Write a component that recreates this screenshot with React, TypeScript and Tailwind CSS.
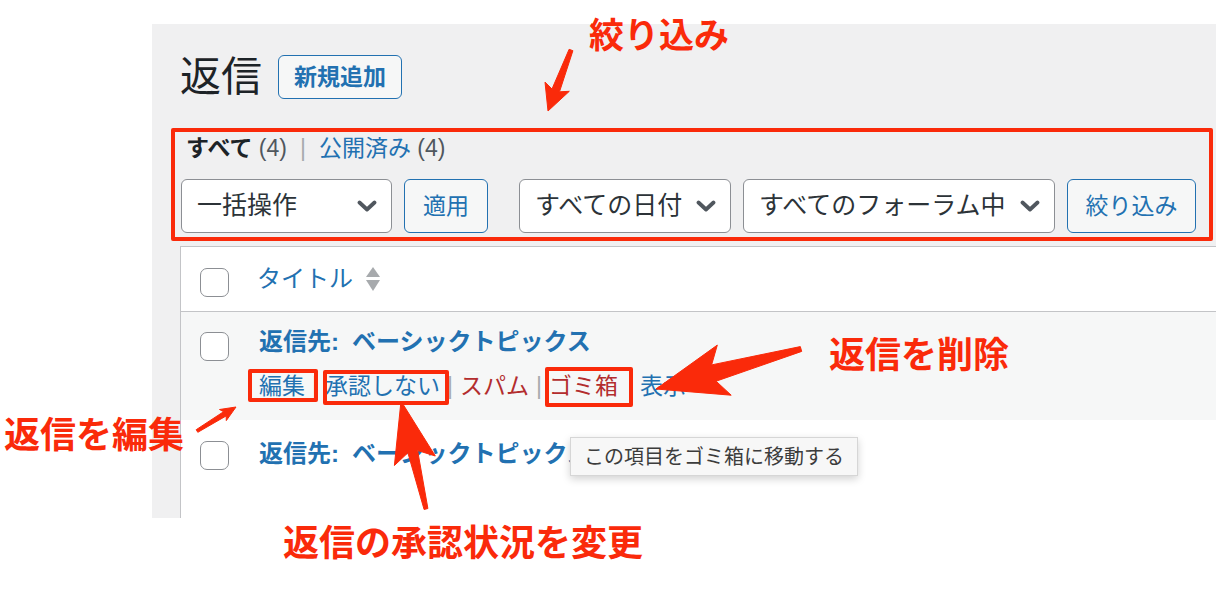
import React from 'react';

type Pt = [number, number];

// Skitch style arrow: thin tail, wider neck, triangular head with swept barbs
function arrowPoints(tail: Pt, tip: Pt, tailW: number, neckW: number, headLen: number, headW: number, sweep = 0.18): string {
    const dx = tip[0] - tail[0];
    const dy = tip[1] - tail[1];
    const len = Math.hypot(dx, dy);
    const ux = dx / len;
    const uy = dy / len;
    const nx = -uy;
    const ny = ux;
    const bx = tip[0] - ux * headLen;
    const by = tip[1] - uy * headLen;
    const back = headLen * sweep;
    const pts: Pt[] = [
        [tail[0] + (nx * tailW) / 2, tail[1] + (ny * tailW) / 2],
        [bx + (nx * neckW) / 2, by + (ny * neckW) / 2],
        [bx + (nx * headW) / 2 - ux * back, by + (ny * headW) / 2 - uy * back],
        tip,
        [bx - (nx * headW) / 2 - ux * back, by - (ny * headW) / 2 - uy * back],
        [bx - (nx * neckW) / 2, by - (ny * neckW) / 2],
        [tail[0] - (nx * tailW) / 2, tail[1] - (ny * tailW) / 2]
    ];
    return pts.map((p) => `${p[0].toFixed(1)},${p[1].toFixed(1)}`).join(' ');
}

const ARROWS: { tail: Pt; tip: Pt; tailW: number; neckW: number; headLen: number; headW: number }[] = [
    { tail: [571, 50], tip: [548, 111], tailW: 4, neckW: 8, headLen: 22, headW: 26 },
    { tail: [801, 349], tip: [656, 389], tailW: 5, neckW: 17, headLen: 60, headW: 52 },
    { tail: [197, 431], tip: [236, 407], tailW: 3, neckW: 5, headLen: 13, headW: 13 },
    { tail: [426, 509], tip: [401, 401], tailW: 4, neckW: 10, headLen: 52, headW: 42 }
];

function Chevron() {
    return (
        <svg width="20" height="12" viewBox="0 0 20 12" className="shrink-0">
            <path d="M2.5 2.5 L10 9.5 L17.5 2.5" fill="none" stroke="#50575e" strokeWidth="3.8" strokeLinecap="round" strokeLinejoin="round" />
        </svg>
    );
}

function Select({ label, width }: { label: string; width: string }) {
    return (
        <div className={`${width} h-[54px] flex items-center justify-between pl-[15px] pr-[14px] bg-white border border-[#8c8f94] rounded-[6px] text-[25px] text-[#2c3338]`}>
            <span className="whitespace-nowrap">{label}</span>
            <Chevron />
        </div>
    );
}

function Checkbox() {
    return <div className="w-[29px] h-[29px] bg-white border-[1.5px] border-[#8c8f94] rounded-[7px]" />;
}

function Sep({ wide = false }: { wide?: boolean }) {
    return <span className={wide ? 'ml-[10px] mr-[6px] text-[#a7aaad]' : 'mx-[7px] text-[#a7aaad]'}>|</span>;
}

function ReplyTitle() {
    return (
        <div className="text-[24px] leading-[32px] font-bold text-[#2271b1] whitespace-nowrap">
            返信先:<span className="ml-[13px]">ベーシックトピックス</span>
        </div>
    );
}

export default function App() {
    return (
        <div className="relative w-[1216px] h-[614px] overflow-hidden bg-white pl-[152px] pt-[24px] font-['Liberation_Sans','Noto_Sans_CJK_JP',sans-serif]">
            {/* Screenshot panel */}
            <div className="h-[494px] bg-[#f0f0f1] overflow-hidden pl-[29px] pt-[31px]">
                {/* Title */}
                <div className="flex items-center h-[44px]">
                    <h1 className="text-[41px] leading-[44px] text-[#1d2327] -ml-[1px]">返信</h1>
                    <button className="ml-[16px] w-[124px] h-[44px] border-[1.5px] border-[#2271b1] rounded-[6px] bg-[#f6f7f7] text-[23px] font-bold text-[#2271b1]">
                        新規追加
                    </button>
                </div>

                {/* Status filter */}
                <div className="mt-[34px] h-[30px] leading-[30px] text-[23px] pl-[5px] whitespace-nowrap">
                    <span className="font-bold text-[#1d2327]">すべて</span>
                    <span className="text-[#50575e]"> (4)</span>
                    <span className="mx-[13px] text-[#a7aaad]">|</span>
                    <span className="text-[#2271b1]">公開済み</span>
                    <span className="text-[#50575e]"> (4)</span>
                </div>

                {/* Bulk actions / filters */}
                <div className="mt-[16px] flex items-center h-[54px]">
                    <Select label="一括操作" width="w-[211px]" />
                    <button className="ml-[12px] w-[84px] h-[54px] border border-[#2271b1] rounded-[6px] bg-[#f6f7f7] text-[23px] text-[#2271b1]">
                        適用
                    </button>
                    <div className="ml-[31px]">
                        <Select label="すべての日付" width="w-[212px]" />
                    </div>
                    <div className="ml-[12px]">
                        <Select label="すべてのフォーラム中" width="w-[312px]" />
                    </div>
                    <button className="ml-[12px] w-[129px] h-[54px] border border-[#2271b1] rounded-[6px] bg-[#f6f7f7] text-[23px] text-[#2271b1] whitespace-nowrap">
                        絞り込み
                    </button>
                </div>

                {/* Table */}
                <div className="mt-[13px] -ml-[1px] bg-white border-l border-t border-[#c3c4c7]">
                    <div className="flex h-[65px] border-b border-[#c3c4c7]">
                        <div className="w-[76px] pl-[19px] pt-[21px]">
                            <Checkbox />
                        </div>
                        <div className="pt-[16px] flex items-start">
                            <span className="text-[24px] leading-[32px] text-[#2271b1]">タイトル</span>
                            <svg width="14" height="26" viewBox="0 0 14 26" className="ml-[13px] mt-[4px]">
                                <polygon points="7,0 14,10 0,10" fill="#a7aaad" />
                                <polygon points="0,13 14,13 7,24" fill="#a7aaad" />
                            </svg>
                        </div>
                    </div>

                    <div className="flex h-[108px] bg-[#f6f7f7]">
                        <div className="w-[78px] pl-[19px] pt-[20px]">
                            <Checkbox />
                        </div>
                        <div className="pt-[14px]">
                            <ReplyTitle />
                            <div className="mt-[13px] text-[23px] leading-[30px] whitespace-nowrap">
                                <span className="text-[#2271b1]">編集</span>
                                <Sep />
                                <span className="text-[#2271b1]">承認しない</span>
                                <Sep />
                                <span className="text-[#b32d2e]">スパム</span>
                                <Sep />
                                <span className="text-[#b32d2e]">ゴミ箱</span>
                                <Sep wide />
                                <span className="text-[#2271b1]">表示</span>
                            </div>
                        </div>
                    </div>

                    <div className="flex h-[108px] bg-white">
                        <div className="w-[78px] pl-[19px] pt-[21px]">
                            <Checkbox />
                        </div>
                        <div className="pt-[18px]">
                            <ReplyTitle />
                        </div>
                    </div>
                </div>
            </div>

            {/* Tooltip */}
            <div className="absolute left-[570px] top-[437px] w-[288px] h-[39px] flex items-center pl-[13px] bg-[#f7f7f7] border border-[#d6d6d6] shadow-[0_3px_8px_rgba(0,0,0,0.18)] text-[20px] text-[#3c3c3c] whitespace-nowrap">
                この項目をゴミ箱に移動する
            </div>

            {/* Annotation boxes */}
            <div className="absolute left-[171px] top-[128px] w-[1042px] h-[113px] border-[4px] border-[#fa2a0a] rounded-[2px]" />
            <div className="absolute left-[248px] top-[369px] w-[70px] h-[33px] border-[4px] border-[#fa2a0a] rounded-[2px]" />
            <div className="absolute left-[323px] top-[370px] w-[126px] h-[35px] border-[4px] border-[#fa2a0a] rounded-[2px]" />
            <div className="absolute left-[545px] top-[367px] w-[88px] h-[40px] border-[4px] border-[#fa2a0a] rounded-[2px]" />

            {/* Annotation arrows */}
            <svg className="absolute left-0 top-0 pointer-events-none" width="1216" height="614" viewBox="0 0 1216 614">
                {ARROWS.map((a, i) => (
                    <polygon key={i} points={arrowPoints(a.tail, a.tip, a.tailW, a.neckW, a.headLen, a.headW)} fill="#fa2a0a" stroke="#fa2a0a" strokeWidth="1" strokeLinejoin="round" />
                ))}
            </svg>

            {/* Annotation labels */}
            <div className="absolute left-[589px] top-[17px] text-[35px] leading-[38px] font-bold text-[#fa2a0a] whitespace-nowrap">絞り込み</div>
            <div className="absolute left-[829px] top-[337px] text-[36px] leading-[38px] font-bold text-[#fa2a0a] whitespace-nowrap">返信を削除</div>
            <div className="absolute left-[4px] top-[417px] text-[36px] leading-[38px] font-bold text-[#fa2a0a] whitespace-nowrap">返信を編集</div>
            <div className="absolute left-[283px] top-[525px] text-[36px] leading-[38px] font-bold text-[#fa2a0a] whitespace-nowrap">返信の承認状況を変更</div>
        </div>
    );
}
